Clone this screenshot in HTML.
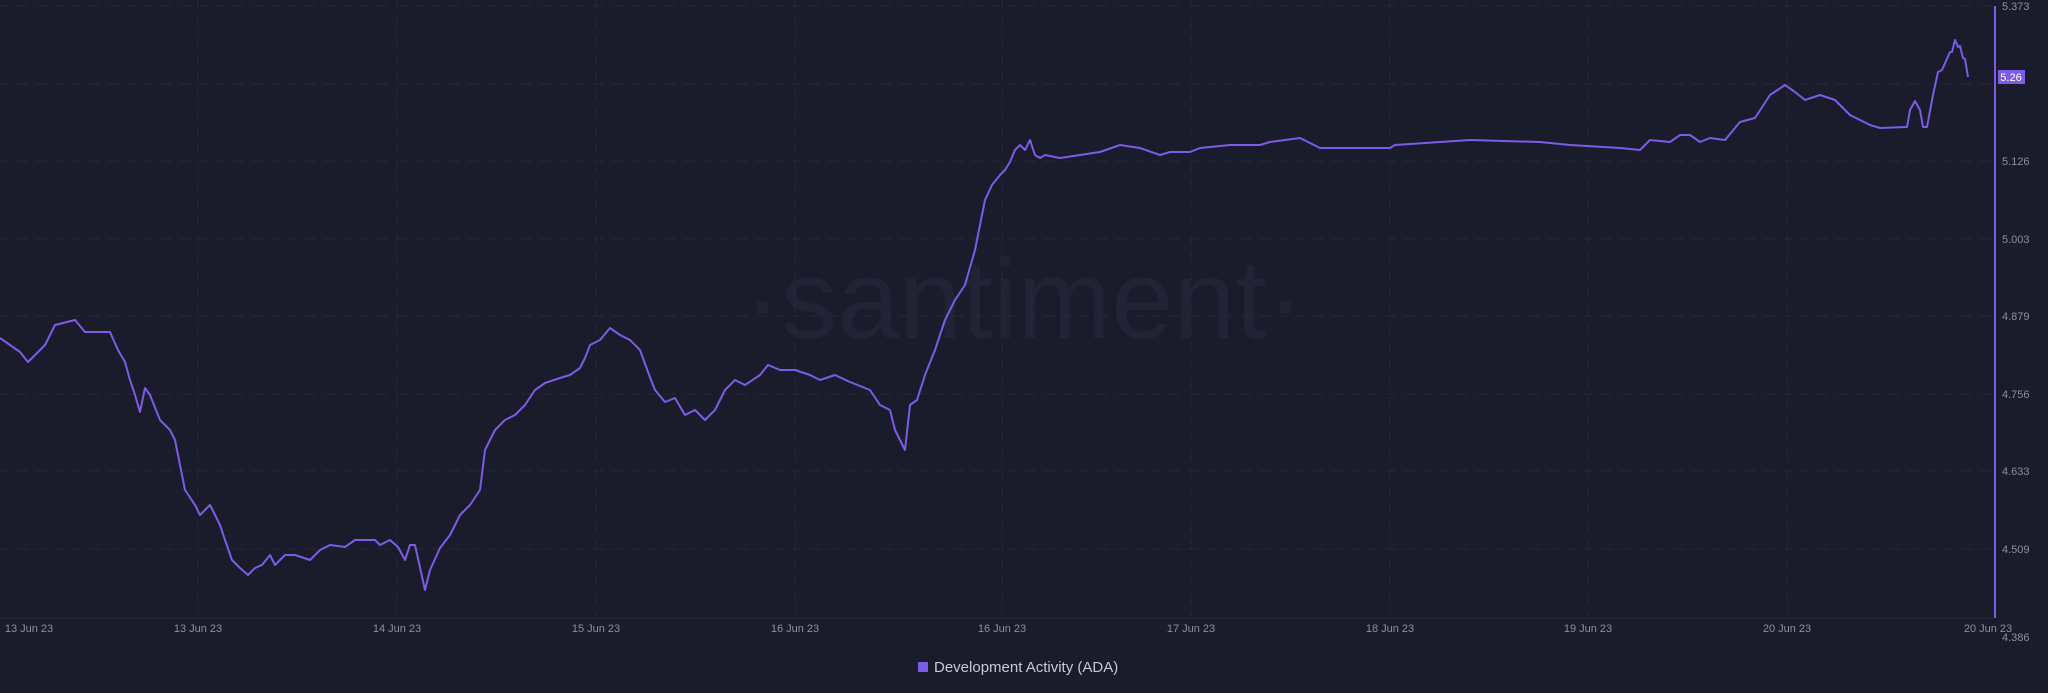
<!DOCTYPE html>
<html><head><meta charset="utf-8"><style>
html,body{margin:0;padding:0;background:#1a1b2b;}
body{width:2048px;height:693px;overflow:hidden;position:relative;font-family:"Liberation Sans",sans-serif;}
</style></head><body>
<svg width="2048" height="693" style="position:absolute;left:0;top:0" xmlns="http://www.w3.org/2000/svg">
<rect width="2048" height="693" fill="#1a1b2b"/>
<text x="1024" y="338" text-anchor="middle" font-family="Liberation Sans,sans-serif" font-size="112" fill="#212436">·santiment·</text>
<g stroke="#262939" stroke-width="1" stroke-dasharray="10,8">
<line x1="0" y1="6" x2="1994" y2="6"/><line x1="0" y1="84" x2="1994" y2="84"/><line x1="0" y1="161" x2="1994" y2="161"/><line x1="0" y1="239" x2="1994" y2="239"/><line x1="0" y1="316" x2="1994" y2="316"/><line x1="0" y1="394" x2="1994" y2="394"/><line x1="0" y1="471" x2="1994" y2="471"/><line x1="0" y1="549" x2="1994" y2="549"/>
<line x1="198" y1="0" x2="198" y2="618"/><line x1="397" y1="0" x2="397" y2="618"/><line x1="596" y1="0" x2="596" y2="618"/><line x1="795" y1="0" x2="795" y2="618"/><line x1="1002" y1="0" x2="1002" y2="618"/><line x1="1191" y1="0" x2="1191" y2="618"/><line x1="1390" y1="0" x2="1390" y2="618"/><line x1="1588" y1="0" x2="1588" y2="618"/><line x1="1787" y1="0" x2="1787" y2="618"/>
</g>
<line x1="0" y1="618" x2="1994" y2="618" stroke="#272a3c"/>
<line x1="1995" y1="6" x2="1995" y2="618" stroke="#7c5ce6" stroke-width="2"/>
<g font-size="11" fill="#8c8ea6">
<text x="2002" y="10">5.373</text><text x="2002" y="165">5.126</text><text x="2002" y="243">5.003</text><text x="2002" y="320">4.879</text><text x="2002" y="398">4.756</text><text x="2002" y="475">4.633</text><text x="2002" y="553">4.509</text><text x="2002" y="641">4.386</text>
</g>
<g font-size="11" fill="#8c8ea6" text-anchor="middle">
<text x="29" y="632">13 Jun 23</text><text x="198" y="632">13 Jun 23</text><text x="397" y="632">14 Jun 23</text><text x="596" y="632">15 Jun 23</text><text x="795" y="632">16 Jun 23</text><text x="1002" y="632">16 Jun 23</text><text x="1191" y="632">17 Jun 23</text><text x="1390" y="632">18 Jun 23</text><text x="1588" y="632">19 Jun 23</text><text x="1787" y="632">20 Jun 23</text><text x="1988" y="632">20 Jun 23</text>
</g>
<polyline fill="none" stroke="#7c5ce6" stroke-width="2" stroke-linejoin="round" points="0,338 10,345 20,352 28,362 35,355 45,345 55,325 75,320 85,332 110,332 118,350 125,362 130,380 135,395 140,412 145,388 150,395 160,420 170,430 175,440 180,465 185,490 195,505 200,515 210,505 215,515 220,525 225,540 232,560 240,568 248,575 255,568 262,565 270,555 275,565 285,555 295,555 310,560 320,550 330,545 345,547 355,540 375,540 380,545 390,540 398,547 405,560 410,545 415,545 425,590 430,570 440,548 450,535 460,515 470,505 480,490 485,450 495,430 505,420 515,415 525,405 535,390 545,383 560,378 570,375 580,368 585,358 590,345 600,340 610,328 620,335 630,340 640,350 648,372 655,390 665,402 675,398 685,415 695,410 705,420 715,410 725,390 735,380 745,385 760,375 768,365 780,370 795,370 810,375 820,380 835,375 850,382 870,390 880,405 890,410 895,430 905,450 910,405 917,400 925,375 935,350 945,320 955,300 965,285 975,250 985,200 992,185 1000,175 1005,170 1010,162 1015,150 1020,145 1025,150 1030,140 1035,155 1040,158 1045,155 1060,158 1080,155 1100,152 1120,145 1140,148 1160,155 1170,152 1190,152 1200,148 1230,145 1260,145 1270,142 1300,138 1320,148 1390,148 1395,145 1470,140 1540,142 1570,145 1620,148 1640,150 1650,140 1670,142 1680,135 1690,135 1700,142 1710,138 1725,140 1740,122 1755,118 1770,95 1785,85 1795,92 1805,100 1820,95 1835,100 1850,115 1870,125 1880,128 1907,127 1910,110 1915,101 1920,110 1923,127 1927,127 1933,95 1938,72 1942,70 1950,52 1952,52 1955,40 1958,47 1960,46 1963,58 1965,59 1968,77"/>
<rect x="1998" y="70" width="27" height="14" fill="#7c5ce6"/>
<text x="2011" y="81" font-size="11" fill="#ffffff" text-anchor="middle">5.26</text>
<rect x="918" y="662" width="10" height="10" fill="#7c5ce6"/>
<text x="934" y="672" font-size="15" fill="#c8c9d6">Development Activity (ADA)</text>
</svg>
</body></html>
